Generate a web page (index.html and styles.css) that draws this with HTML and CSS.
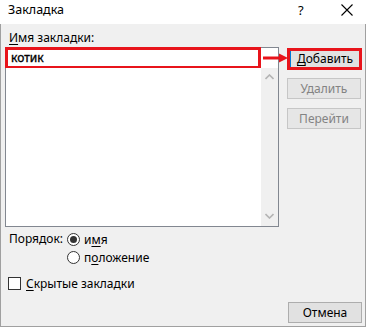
FILE: index.html
```html
<!DOCTYPE html>
<html lang="ru">
<head>
<meta charset="utf-8">
<title>Закладка</title>
<link rel="stylesheet" href="styles.css">
</head>
<body>
<div class="window">
  <div class="titlebar">
    <span class="title">Закладка</span>
    <span class="help">?</span>
    <span class="close"><svg width="12" height="12" viewBox="0 0 12 12"><path d="M0.5 0.5 L11.5 11.5 M11.5 0.5 L0.5 11.5" stroke="#000" stroke-width="1.1" fill="none"/></svg></span>
  </div>
  <div class="body">
    <div class="main">
      <div class="left">
        <div class="label"><u>И</u>мя закладки:</div>
        <div class="combo">
          <div class="edit"><div class="hl">котик</div></div>
          <div class="list">
            <div class="list-area"></div>
            <div class="scroll">
              <svg class="chev" width="9" height="6" viewBox="0 0 9 6"><path d="M0.5 5 L4.5 1 L8.5 5" stroke="#b4b4b4" stroke-width="1.6" fill="none"/></svg>
              <svg class="chev" width="9" height="6" viewBox="0 0 9 6"><path d="M0.5 1 L4.5 5 L8.5 1" stroke="#b4b4b4" stroke-width="1.6" fill="none"/></svg>
            </div>
          </div>
        </div>
        <div class="order">
          <div class="order-label">Порядок:</div>
          <div class="radios">
            <div class="radio-row"><span class="radio checked"></span><span>и<u>м</u>я</span></div>
            <div class="radio-row"><span class="radio"></span><span>п<u>о</u>ложение</span></div>
          </div>
        </div>
        <div class="check-row"><span class="checkbox"></span><span><u>С</u>крытые закладки</span></div>
      </div>
      <div class="right">
        <div class="btn-hl"><div class="btn default"><u>Д</u>обавить</div></div>
        <div class="btn disabled">Удалить</div>
        <div class="btn disabled">Перейти</div>
      </div>
    </div>
    <div class="footer">
      <div class="btn">Отмена</div>
    </div>
    <svg class="arrow" width="26" height="10" viewBox="0 0 26 10"><path d="M0 5 H17" stroke="#e8141b" stroke-width="3"/><path d="M16 0.5 L25 5 L16 9.5 Z" fill="#e8141b"/></svg>
  </div>
</div>
</body>
</html>
```

FILE: styles.css
```css
* { box-sizing: border-box; }
html, body { margin: 0; padding: 0; background: #fff; }
body {
  font-family: "Segoe UI", "Noto Sans", "Liberation Sans", sans-serif;
  font-size: 12px;
  color: #000;
}
u { text-decoration: underline; text-underline-offset: 2px; }
.window {
  width: 366px;
  height: 327px;
  border: 1px solid #a0a0a0;
  border-top: none;
  display: flex;
  flex-direction: column;
  background: #f0f0f0;
}
.titlebar {
  height: 24px;
  background: #fff;
  display: flex;
  align-items: center;
  padding-left: 8px;
  margin: 0 -1px;
}
.title { font-size: 12.5px; flex: 1; line-height: 20px; padding-bottom: 4px; }
.help { width: 12px; font-size: 13px; margin-right: 31px; padding-bottom: 4px; }
.close { width: 12px; margin-right: 13px; display: flex; padding-bottom: 5px; }
.body {
  flex: 1;
  position: relative;
  display: flex;
  flex-direction: column;
  padding: 6px 3px 3px 4px;
}
.main { display: flex; flex: 1; }
.left { width: 275px; display: flex; flex-direction: column; }
.label { line-height: 16px; height: 17px; padding-left: 4px; }
.combo { display: flex; flex-direction: column; }
.edit {
  height: 21px;
  background: #fff;
  border: 1px solid #828790;
  border-bottom: none;
  display: flex;
}
.hl {
  width: 256px;
  height: 22px;
  margin: -1px 0 0 -1px;
  border: 3px solid #e8141b;
  -webkit-text-stroke: 0.35px #000;
  line-height: 15px;
  padding-left: 3px;
}
.list {
  height: 159px;
  border: 1px solid #828790;
  border-top: none;
  display: flex;
  background: #fff;
}
.list-area { flex: 1; }
.scroll {
  width: 17px;
  background: #f0f0f0;
  display: flex;
  flex-direction: column;
  justify-content: space-between;
  align-items: center;
  padding: 6px 0 7px;
}
.chev { display: block; }
.order { display: flex; padding-top: 3px; }
.order-label { width: 62px; padding-left: 4px; line-height: 18px; }
.radios { display: flex; flex-direction: column; }
.radio-row { display: flex; align-items: center; height: 18px; gap: 4px; }
.radio {
  width: 13px; height: 13px;
  border: 1px solid #333;
  border-radius: 50%;
  background: #fff;
  display: flex; align-items: center; justify-content: center;
}
.radio.checked::after {
  content: "";
  width: 7px; height: 7px;
  border-radius: 50%;
  background: #333;
}
.check-row { display: flex; align-items: center; gap: 5px; height: 18px; margin-top: 8px; padding-left: 3px; }
.checkbox { width: 13px; height: 13px; border: 1px solid #333; background: #fff; }
.right {
  margin-left: 8px;
  width: 75px;
  display: flex;
  flex-direction: column;
  padding-top: 18px;
}
.btn {
  width: 74px;
  height: 21px;
  background: #e1e1e1;
  border: 1px solid #adadad;
  display: flex;
  align-items: center;
  justify-content: center;
  line-height: 1;
}
.btn-hl {
  width: 75px;
  height: 22px;
  border: 3px solid #e8141b;
  margin-bottom: 8px;
  display: flex;
}
.btn.default {
  width: auto; height: auto; flex: 1;
  border: none;
  border-left: 1px solid #0078d7;
  background: #e1e1e1;
}
.btn.disabled {
  background: #e6e6e6;
  border-color: #c6c6c6;
  color: #838383;
  margin-bottom: 9px;
}
.footer { display: flex; justify-content: flex-end; }
.arrow { position: absolute; left: 262px; top: 29px; }
```
